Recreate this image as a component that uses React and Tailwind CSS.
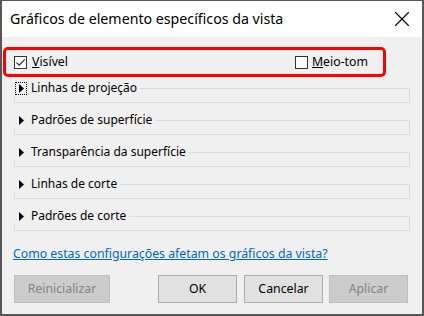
import { X } from 'lucide-react';

const sections = [
  'Linhas de projeção',
  'Padrões de superfície',
  'Transparência da superfície',
  'Linhas de corte',
  'Padrões de corte',
];

const Triangle = () => (
  <svg width="5" height="9" viewBox="0 0 5 9" className="block">
    <path d="M0 0 L5 4.5 L0 9 Z" fill="#000" />
  </svg>
);

const CheckBox = ({ checked }) => (
  <span className="w-[13px] h-[13px] border border-[#333333] bg-white flex items-center justify-center">
    {checked && (
      <svg width="11" height="11" viewBox="0 0 11 11">
        <path d="M1.5 5.5 L4.2 8.2 L9.8 2.3" fill="none" stroke="#333" strokeWidth="1.2" />
      </svg>
    )}
  </span>
);

const Section = ({ label, focused }) => (
  <div className="relative h-[32px] pt-[8px]">
    <div className="ml-[12px] w-[396px] h-[15px] border border-[#dcdcdc]" />
    <div className="absolute left-[12px] top-0 h-[16px] pr-[3px] bg-[#f0f0f0] flex items-center">
      <span
        className={`w-[12px] h-[13px] flex items-center justify-center ml-[1px] ${focused ? 'border border-dotted border-black' : ''}`}
      >
        <Triangle />
      </span>
      <span className="ml-[4px] text-[12px] text-black leading-none">{label}</span>
    </div>
  </div>
);

const btnBase = 'h-[28px] border text-[12.3px] flex items-center justify-center';

export default function App() {
  return (
    <div
      className="w-[424px] h-[316px] border-t border-l-2 border-r-2 border-b-2 border-[#575757] bg-[#f0f0f0] flex flex-col"
      style={{ fontFamily: '"Noto Sans", "Open Sans", sans-serif' }}
    >
      <div className="h-[36px] bg-white flex items-center justify-between pl-[8px] pr-[7px]">
        <span className="text-[14.2px] text-black">Gráficos de elemento específicos da vista</span>
        <X size={26} strokeWidth={1} color="#000" />
      </div>

      <div className="mt-[10px] ml-[1px] w-[383px] h-[30px] border-[3px] border-[#ff0000] rounded-[5px] flex items-center justify-between pl-[8px] pr-[15px]">
        <label className="flex items-center gap-[5px] text-[12.3px] text-black">
          <CheckBox checked />
          <span><span className="underline">V</span>isível</span>
        </label>
        <label className="flex items-center gap-[4px] text-[12.3px] text-black">
          <CheckBox />
          <span><span className="underline">M</span>eio-tom</span>
        </label>
      </div>

      <div className="mt-[3px]">
        {sections.map((s, i) => (
          <Section key={s} label={s} focused={i === 0} />
        ))}
      </div>

      <div className="mt-[6px] pl-[11px] h-[16px] flex items-center">
        <a href="#" className="text-[12.3px] text-[#0066cc] underline leading-none">
          Como estas configurações afetam os gráficos da vista?
        </a>
      </div>

      <div className="mt-[13px] pl-[12px] flex">
        <button className={`${btnBase} w-[96px] bg-[#cccccc] border-[#bfbfbf] text-[#838383]`}>Reinicializar</button>
        <button className={`${btnBase} ml-[48px] w-[79px] bg-[#e1e1e1] border-[#adadad] text-black`}>OK</button>
        <button className={`${btnBase} ml-[7px] w-[79px] bg-[#e1e1e1] border-[#adadad] text-black`}>Cancelar</button>
        <button className={`${btnBase} ml-[6px] w-[79px] bg-[#cccccc] border-[#bfbfbf] text-[#838383]`}>Aplicar</button>
      </div>
    </div>
  );
}
